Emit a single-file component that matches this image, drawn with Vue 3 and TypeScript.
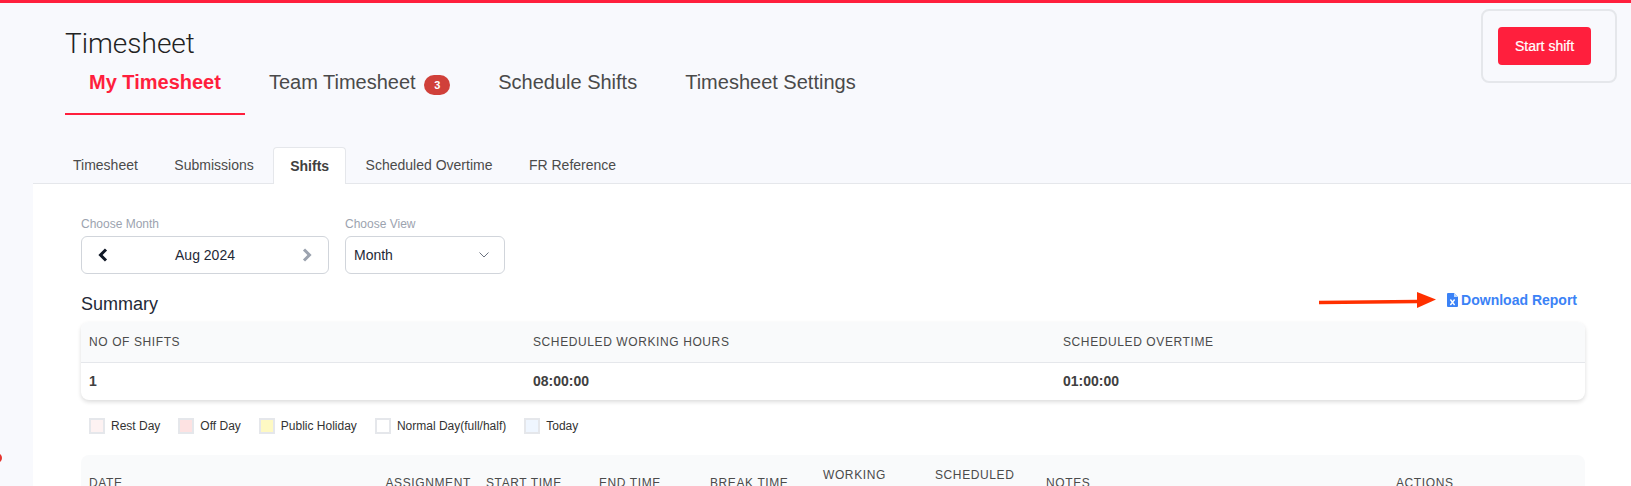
<script setup lang="ts">
import { ref } from 'vue'

const mainTabs = [
  { label: 'My Timesheet', active: true, badge: 0 },
  { label: 'Team Timesheet', active: false, badge: 3 },
  { label: 'Schedule Shifts', active: false, badge: 0 },
  { label: 'Timesheet Settings', active: false, badge: 0 },
]
const subTabs = ['Timesheet', 'Submissions', 'Shifts', 'Scheduled Overtime', 'FR Reference']
const activeSub = ref('Shifts')

const legend = [
  { label: 'Rest Day', cls: 'rest' },
  { label: 'Off Day', cls: 'off' },
  { label: 'Public Holiday', cls: 'holiday' },
  { label: 'Normal Day(full/half)', cls: 'normal' },
  { label: 'Today', cls: 'today' },
]

const shiftColumns = [
  'Date',
  'Assignment',
  'Start Time',
  'End Time',
  'Break Time',
  'Working Hours',
  'Scheduled Overtime',
  'Notes',
  'Actions',
]
</script>

<template>
  <div class="page">
    <span class="edge-dot"></span>
    <header class="top">
      <div>
        <h1 class="title">Timesheet</h1>
        <nav class="main-tabs">
          <a v-for="tab in mainTabs" :key="tab.label" class="main-tab" :class="{ active: tab.active }">
            {{ tab.label }}
            <span v-if="tab.badge" class="badge">{{ tab.badge }}</span>
          </a>
        </nav>
      </div>
      <div class="shift-card">
        <button class="start-btn">Start shift</button>
      </div>
    </header>

    <nav class="sub-tabs">
      <a v-for="tab in subTabs" :key="tab" class="sub-tab" :class="{ active: tab === activeSub }">{{ tab }}</a>
    </nav>

    <main class="panel">
      <div class="filters">
        <div>
          <label class="field-label">Choose Month</label>
          <div class="control month">
            <svg width="10" height="14" viewBox="0 0 10 14">
              <path d="M8 1.5 2.5 7 8 12.5" fill="none" stroke="#111827" stroke-width="3" />
            </svg>
            <span>Aug 2024</span>
            <svg width="10" height="14" viewBox="0 0 10 14">
              <path d="M2 1.5 7.5 7 2 12.5" fill="none" stroke="#9ca3af" stroke-width="3" />
            </svg>
          </div>
        </div>
        <div>
          <label class="field-label">Choose View</label>
          <div class="control view">
            <span>Month</span>
            <svg width="10" height="6" viewBox="0 0 10 6">
              <path d="M.5.5 5 5 9.5.5" fill="none" stroke="#6b7280" stroke-width="1" />
            </svg>
          </div>
        </div>
      </div>

      <div class="summary-head">
        <h2 class="summary-title">Summary</h2>
        <a class="download">
          <svg class="arrow" width="118" height="20" viewBox="0 0 118 20">
            <path d="M0 12.5 99 11.5" stroke="#ff3000" stroke-width="3.4" fill="none" />
            <path d="M98 2 117 9.5 98 18Z" fill="#ff3000" />
          </svg>
          <svg width="11" height="14" viewBox="0 0 11 14">
            <path d="M0 1a1 1 0 0 1 1-1h6l4 4v9a1 1 0 0 1-1 1H1a1 1 0 0 1-1-1Z" fill="#3b82f6" />
            <path d="M7 0v4h4Z" fill="#bfdbfe" />
            <path d="M3.4 6.5 7.6 12M7.6 6.5 3.4 12" stroke="#fff" stroke-width="1.4" />
          </svg>
          Download Report
        </a>
      </div>

      <section class="table summary">
        <div class="cell th">No of Shifts</div>
        <div class="cell th">Scheduled Working Hours</div>
        <div class="cell th">Scheduled Overtime</div>
        <div class="cell td">1</div>
        <div class="cell td">08:00:00</div>
        <div class="cell td">01:00:00</div>
      </section>

      <ul class="legend">
        <li v-for="item in legend" :key="item.label">
          <span class="swatch" :class="item.cls"></span>{{ item.label }}
        </li>
      </ul>

      <section class="table shifts">
        <div v-for="col in shiftColumns" :key="col" class="cell th">{{ col }}</div>
      </section>
    </main>
  </div>
</template>

<style>
html,
body {
  margin: 0;
  overflow: hidden;
}
</style>

<style scoped>
.page {
  position: relative;
  height: 100vh;
  overflow: hidden;
  box-sizing: border-box;
  border-top: 3px solid #ff1f3d;
  background: #f8f9fd;
  font-family: 'Liberation Sans', Arial, sans-serif;
  color: #404040;
}

.edge-dot {
  position: absolute;
  left: -8px;
  top: 450px;
  width: 10px;
  height: 10px;
  border-radius: 50%;
  background: #e5352f;
}

.top {
  display: flex;
  justify-content: space-between;
  align-items: flex-start;
  padding: 6px 14px 0 65px;
}

.title {
  margin: 19px 0 0;
  font-family: Roboto, sans-serif;
  font-size: 28px;
  font-weight: 300;
  line-height: 31px;
  color: #222;
}

.main-tabs {
  display: flex;
}

.main-tab {
  padding: 9px 24px 17px;
  border-bottom: 2px solid transparent;
  font-size: 20px;
  line-height: 28px;
  color: #4a4a4a;
}

.main-tab.active {
  border-bottom-color: #ff1f3d;
  font-weight: 700;
  color: #ff1f3d;
}

.badge {
  display: inline-block;
  width: 26px;
  height: 20px;
  margin-left: 3px;
  border-radius: 10px;
  background: #d0403a;
  font-size: 11px;
  font-weight: 700;
  line-height: 20px;
  text-align: center;
  color: #fff;
  vertical-align: 0;
}

.shift-card {
  padding: 16px 24px 16px 15px;
  border: 2px solid #e5e7eb;
  border-radius: 8px;
}

.start-btn {
  display: block;
  width: 93px;
  height: 38px;
  padding: 0;
  border: none;
  border-radius: 4px;
  background: #ff1f3d;
  font-family: inherit;
  font-size: 14px;
  color: #fff;
  -webkit-text-stroke: 0.2px #fff;
}

.sub-tabs {
  display: flex;
  gap: 2.5px;
  margin: 32px 0 0 33px;
  padding-left: 23px;
  border-bottom: 1px solid #e5e7eb;
}

.sub-tab {
  margin-bottom: -1px;
  padding: 0 16px 2px;
  border: 1px solid transparent;
  border-bottom: none;
  border-radius: 4px 4px 0 0;
  font-size: 14px;
  line-height: 34px;
  color: #4b4b4b;
}

.sub-tab.active {
  padding-bottom: 0;
  background: #fff;
  border-color: #e5e7eb;
  font-weight: 700;
  line-height: 36px;
  color: #404040;
}

.panel {
  height: 400px;
  margin-left: 33px;
  padding: 32px 46px 0 48px;
  background: #fff;
}

.filters {
  display: flex;
  gap: 16px;
}

.field-label {
  display: block;
  margin-bottom: 4px;
  font-size: 12px;
  line-height: 16px;
  color: #9ca3af;
}

.control {
  display: flex;
  align-items: center;
  justify-content: space-between;
  box-sizing: border-box;
  height: 38px;
  border: 1px solid #d1d5db;
  border-radius: 6px;
  font-size: 14px;
  color: #1f2937;
}

.month {
  width: 248px;
  padding: 0 16px 0 16px;
}

.view {
  width: 160px;
  padding: 0 15px 0 8px;
}

.summary-head {
  display: flex;
  align-items: flex-start;
  justify-content: space-between;
  margin-top: 16px;
  margin-bottom: 4px;
}

.summary-title {
  margin: 0;
  font-size: 18px;
  font-weight: 400;
  line-height: 28px;
  color: #1f2937;
}

.download {
  position: relative;
  display: flex;
  align-items: center;
  gap: 3px;
  margin-right: 8px;
  font-size: 14px;
  font-weight: 700;
  line-height: 20px;
  color: #3b82f6;
}

.arrow {
  position: absolute;
  left: -128px;
  top: 0;
}

.table {
  display: grid;
  border-radius: 8px;
  font-size: 12px;
}

.summary {
  grid-template-columns: 444px 530px 1fr;
  box-shadow: 0 2px 4px rgba(0, 0, 0, 0.14);
}

.shifts {
  grid-template-columns: 296.5px 100.5px 113px 111px 113px 112px 111px 350px 1fr;
  margin-top: 21px;
  background: #f9fafb;
}

.cell {
  padding: 0 8px;
}

.th {
  letter-spacing: 0.6px;
  line-height: 16px;
  text-transform: uppercase;
  color: #4b4b4b;
}

.summary .th {
  height: 40px;
  line-height: 40px;
  background: #f9fafb;
  border-bottom: 1px solid #e5e7eb;
}

.summary .th:first-child {
  border-top-left-radius: 8px;
}

.summary .th:nth-child(3) {
  border-top-right-radius: 8px;
}

.shifts .th {
  display: flex;
  align-items: center;
  height: 55px;
}

.td {
  height: 37px;
  font-size: 14px;
  font-weight: 700;
  line-height: 37px;
}

.legend {
  display: flex;
  gap: 18px;
  margin: 18px 0 0;
  padding: 0 0 0 8px;
  list-style: none;
  font-size: 12px;
  line-height: 16px;
  color: #333;
}

.legend li {
  display: flex;
  align-items: center;
  gap: 6px;
}

.swatch {
  box-sizing: border-box;
  width: 16px;
  height: 16px;
  border: 2px solid #e5e7eb;
}

.rest {
  background: #fdf2f2;
}

.off {
  background: #fde2e2;
}

.holiday {
  background: #fef9c3;
}

.normal {
  background: #fff;
}

.today {
  background: #eff6ff;
}
</style>
